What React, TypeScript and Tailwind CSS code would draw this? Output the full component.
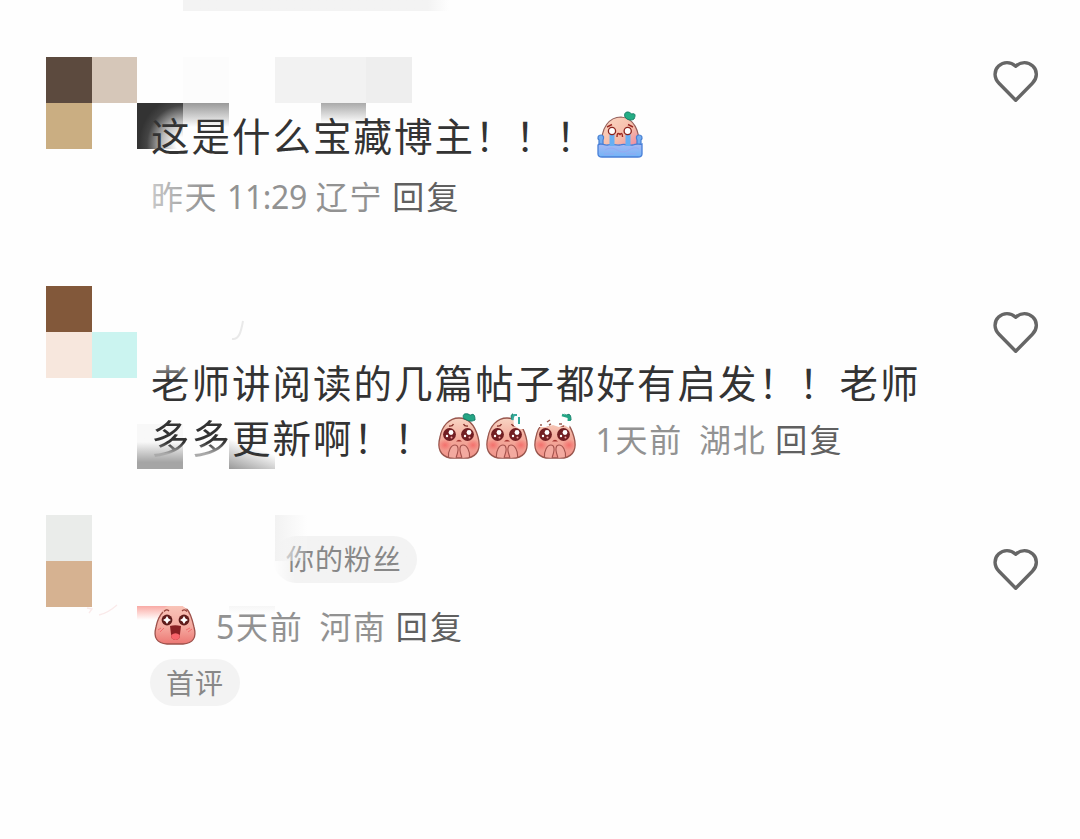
import type { ReactNode } from 'react';

function Heart() {
  return (
    <svg viewBox="0 0 49 44" className="h-[44px] w-[49px] shrink-0" fill="none" stroke="#666" strokeWidth="3.4" strokeLinejoin="round">
      <path d="M24.7 41.2 L8 24.2 C2.8 19 2.8 11.6 7.6 7.1 C12.4 2.5 19.4 2.4 24.7 7.2 C30 2.4 37 2.5 41.8 7.1 C46.6 11.6 46.6 19 41.4 24.2 Z" />
    </svg>
  );
}

function Leaf() {
  return (
    <path d="M27 6 C25 2 27 0 31 1 C33 2 33 2 34 2 C37 0 38 3 38 7 C34 9 31 8 28 6 Z" fill="#24a584" stroke="#167a68" strokeWidth="1" />
  );
}

function CryingPeach() {
  return (
    <svg viewBox="0 0 48 48" className="h-[48px] w-[48px] shrink-0">
      <defs>
        <linearGradient id="cry-skin" x1="0" y1="0" x2="1" y2="1">
          <stop offset="0" stopColor="#fbd9c4" />
          <stop offset=".6" stopColor="#f6bba9" />
          <stop offset="1" stopColor="#ec82a0" />
        </linearGradient>
        <linearGradient id="cry-water" x1="0" y1="0" x2="0" y2="1">
          <stop offset="0" stopColor="#a9b9f3" />
          <stop offset="1" stopColor="#72b4f7" />
        </linearGradient>
      </defs>
      <path d="M6 36 C4 16 14 6 25 6 C38 7 44 20 43 36 Z" fill="url(#cry-skin)" stroke="#94605c" strokeWidth="1.2" />
      <path d="M29 6 C28 3 29 1 32 1 C34 1 35 3 36 3 C39 2 40 4 38 8 C35 10 31 9 29 6 Z" fill="#24ad84" stroke="#188068" strokeWidth="1" />
      <path d="M3 33 V29 C1 27 2 24 5 24 C8 24 8 27 7 29 V33 M45 33 V29 C47 27 46 24 43 24 C40 24 40 27 41 29 V33" fill="#74adf0" stroke="#467fd2" strokeWidth="1.2" />
      <path d="M2 34 C5 31 8 35 12 34 C16 32 19 35 24 34 C29 32 32 35 37 34 C41 32 44 34 46 33 V43 Q46 46 42 46 H6 Q2 46 2 43 Z" fill="url(#cry-water)" stroke="#487fd8" strokeWidth="1.3" />
      <path d="M9 39 Q15 35 21 39 T33 39 T43 38 M8 43 H18 M30 43 H40" fill="none" stroke="#9aa5f0" strokeWidth="1" opacity=".8" />
      <path d="M13.5 22 H18.5 V35 H13.5 Z M29.5 22 H34.5 V35 H29.5 Z" fill="#68aff3" />
      <circle cx="16" cy="20" r="3.6" fill="#fff" stroke="#8c241e" strokeWidth="1.3" />
      <circle cx="31.7" cy="20" r="3.6" fill="#fff" stroke="#8c241e" strokeWidth="1.3" />
      <path d="M11 16 L16 13.5 M32 13.5 L37 16 M21 26 Q21 20.5 24 23.5 Q26.5 20.5 26.5 26" fill="none" stroke="#9d2b25" strokeWidth="1.4" />
    </svg>
  );
}

function BeggingPeach({ erased = 0 }: { erased?: number }) {
  return (
    <svg viewBox="0 0 44 48" className="h-[48px] w-[44px] shrink-0">
      <defs>
        <linearGradient id="beg-skin" x1="0" y1="0" x2="0" y2="1">
          <stop offset="0" stopColor="#f8d5c4" />
          <stop offset=".5" stopColor="#f3aa9b" />
          <stop offset="1" stopColor="#f1938a" />
        </linearGradient>
        <radialGradient id="beg-cheek">
          <stop offset="0" stopColor="#f4605f" stopOpacity=".75" />
          <stop offset="1" stopColor="#f4605f" stopOpacity="0" />
        </radialGradient>
      </defs>
      <path d="M3 24 C5 13 12 5 22 5 C33 5 38 13 41 24 C44 35 41 43 31 45 H13 C3 43 0 35 3 24 Z" fill="url(#beg-skin)" stroke="#98564d" strokeWidth="1.3" />
      <ellipse cx="8" cy="32" rx="7" ry="6" fill="url(#beg-cheek)" />
      <ellipse cx="36" cy="32" rx="7" ry="6" fill="url(#beg-cheek)" />
      <Leaf />
      <circle cx="12.5" cy="21.5" r="6.4" fill="#711e22" />
      <circle cx="30.5" cy="21.5" r="6.4" fill="#711e22" />
      <g fill="#fff">
        <circle cx="14" cy="19.5" r="2.4" />
        <circle cx="32" cy="19.5" r="2.4" />
        <circle cx="10" cy="23" r="1.2" />
        <circle cx="28" cy="23" r="1.2" />
        <circle cx="14.5" cy="24.5" r="1" fill="#f3a2a0" />
        <circle cx="32.5" cy="24.5" r="1" fill="#f3a2a0" />
      </g>
      <path d="M12 13 Q15.500 13.500 16.500 11 M26.500 11 Q27.500 13.500 31 13" fill="none" stroke="#88362f" strokeWidth="1.4" />
      <path d="M19 28.500 Q22 25 25 28.500 Z" fill="#a63834" />
      <path d="M11.500 44 C11 38 14 32 18 32 C21.500 32 21.500 37 20.500 40 L19 45 M32.500 44 C33 38 30 32 26 32 C22.500 32 22.500 37 23.500 40 L25 45" fill="#f3aaa0" stroke="#a4534d" strokeWidth="1.1" />
      {erased === 1 && (
        <>
          <path d="M28 0 H44 V16 H35 L29 13 Z" fill="#fefefe" />
          <path d="M27 7 L29 2 H32 M34 4 V11" fill="none" stroke="#36a99b" strokeWidth="2" />
        </>
      )}
      {erased === 2 && (
        <>
          <path d="M0 0 H31 L38 9 L36 15 L31 12 L26 14 L20 12 L13 14 L6 14 L0 21 Z" fill="#fefefe" />
          <path d="M14 9 L17 7 M16 12 L18 11 M26 11 H29 M8 11 V13" stroke="#9a5b4f" strokeWidth="1.5" />
          <path d="M29 2 L36 4 V8" fill="none" stroke="#24a584" strokeWidth="2.8" />
        </>
      )}
    </svg>
  );
}

function AmazedPeach() {
  return (
    <svg viewBox="0 0 44 42" className="h-[42px] w-[44px] shrink-0">
      <defs>
        <linearGradient id="wow-skin" x1="0" y1="0" x2="0" y2="1">
          <stop offset="0" stopColor="#f9c4b8" />
          <stop offset=".55" stopColor="#f5aaa0" />
          <stop offset="1" stopColor="#ec7773" />
        </linearGradient>
      </defs>
      <path d="M3 23 C5 13 9 4 15 2 H30 C36 5 39 13 41 23 C44 34 40 39 30 40 H14 C4 39 0 34 3 23 Z" fill="url(#wow-skin)" />
      <path d="M10 8 C7 11 4 18 3 23 C0 34 4 39 14 40 H30 C40 39 44 34 41 23 C39 14 36 7 33 4" fill="none" stroke="#9d514b" strokeWidth="1.3" />
      <path d="M27 0 H39 L34 5 Z" fill="#fefefe" />
      <circle cx="14" cy="16" r="5.4" fill="#5f1c1b" />
      <circle cx="31" cy="16" r="5.4" fill="#5f1c1b" />
      <path d="M14 12 L15.500 14.500 L18 16 L15.500 17.500 L14 20 L12.500 17.500 L10 16 L12.500 14.500 Z M31 12 L32.500 14.500 L35 16 L32.500 17.500 L31 20 L29.500 17.500 L27 16 L29.500 14.500 Z" fill="#fff" />
      <path d="M11 7.500 Q13.500 4.500 16 7 M29 7 Q31.500 4.500 34 7.500" fill="none" stroke="#96413b" strokeWidth="1.2" />
      <path d="M17 22 Q22 20.500 28 22 L26.500 34 Q22.500 38 18.500 34 Z" fill="#8a2024" />
      <path d="M18.200 31 Q22.500 27.500 26.800 31 L26.500 34 Q22.500 38 18.500 34 Z" fill="#f8646b" />
      <path d="M5 26 L8 24 M7 28 L11 24 M33 26 L37 24 M35 28 L39 25" stroke="#ef6e70" strokeWidth="1" />
    </svg>
  );
}

function Text({ children }: { children: ReactNode }) {
  return <span className="text-[38.5px] tracking-[2px] text-[#333]">{children}</span>;
}

function Meta({ time, place, className }: { time: ReactNode; place: string; className?: string }) {
  return (
    <span className={`flex items-center text-[32px] text-[#929292] ${className ?? ''}`}>
      <span>{time}</span>
      <span className="tracking-[1.7px]">{place}</span>
      <span className="ml-[9px] tracking-[2.2px] text-[#606060]">回复</span>
    </span>
  );
}

export default function App() {
  return (
    <main className="relative h-[839px] w-[1080px] overflow-hidden bg-[#fefefe] pt-[57px] font-['Noto_Sans','Noto_Sans_CJK_SC',sans-serif] whitespace-nowrap">
      <div className="absolute top-0 left-[183px] h-[11px] w-[266px] bg-linear-to-r from-[#f3f3f3] from-92% to-[#fefefe]" />

      {/* first comment */}
      <section className="relative flex h-[229px] justify-between pr-[40px] pl-[46px]">
        <div className="grid h-[92px] w-[91px] grid-cols-2 grid-rows-2">
          <div className="bg-[#5c4a3e]" />
          <div className="bg-[#d6c7b9]" />
          <div className="bg-[#caae82]" />
        </div>
        <div className="absolute top-0 left-[183px] h-[46px] w-[46px] bg-[#fcfcfc]" />
        <div className="absolute top-0 left-[275px] h-[46px] w-[91px] bg-[#f2f2f2]" />
        <div className="absolute top-0 left-[366px] h-[46px] w-[46px] bg-[#eee]" />
        <div className="absolute top-[46px] left-[137px] h-[46px] w-[46px] bg-[radial-gradient(ellipse_44px_48px_at_100%_90%,#fefefe_15%,#bbb_48%,#444_82%,#333_100%)]" />
        <div className="absolute top-[46px] left-[183px] h-[24px] w-[46px] bg-linear-to-b from-[#999] to-[#fefefe]" />
        <div className="absolute top-[46px] left-[321px] h-[20px] w-[45px] bg-linear-to-b from-[#aaa] to-[#fefefe]" />
        <div className="relative ml-[14px] flex grow flex-col pt-[52px]">
          <div className="flex h-[56px] items-center">
            <Text>这是什么宝藏博主！！！</Text>
            <span className="mb-[5px] -ml-[1px]"><CryingPeach /></span>
          </div>
          <Meta
            className="h-[63px]"
            time={<><span className="tracking-[1.5px]">昨天</span><span className="mr-[9px] ml-[9px] tracking-[-0.4px]">11:29</span></>}
            place="辽宁"
          />
          <div className="absolute top-[118px] left-0 h-[44px] w-[56px] bg-linear-to-r from-[#fefefe]/50 to-transparent" />
        </div>
        <div className="pt-[2px]"><Heart /></div>
      </section>

      {/* second comment */}
      <section className="relative flex h-[229px] justify-between pr-[40px] pl-[46px]">
        <div className="grid h-[92px] w-[91px] grid-cols-2 grid-rows-2">
          <div className="bg-[#82583a]" />
          <div />
          <div className="bg-[#f7e7dd]" />
          <div className="bg-[#cbf4f0]" />
        </div>
        <div className="absolute top-[138px] left-[137px] h-[45px] w-[46px] bg-linear-to-b from-[#f8f8f8] from-40% to-[#a5a5a5] to-85%" />
        <div className="absolute top-[138px] left-[229px] h-[45px] w-[46px] bg-[linear-gradient(200deg,#fefefe_50%,#999)]" />
        <svg viewBox="0 0 16 24" className="absolute top-[33px] left-[229px] h-[24px] w-[16px]">
          <path d="M14 2 C12 13 10 21 3 20" fill="none" stroke="#e9e9e9" strokeWidth="2" />
        </svg>
        <div className="relative ml-[14px] flex grow flex-col pt-[71px]">
          <div className="flex h-[54px] items-center"><Text>老师讲阅读的几篇帖子都好有启发！！老师</Text></div>
          <div className="flex h-[55px] items-center">
            <Text>
              <span className="bg-linear-to-b from-[#333] from-58% to-[#aaa] to-80% bg-clip-text text-transparent">多多</span>
              更新啊！！
            </Text>
            <span className="mb-[4px] ml-[2px] flex gap-[4px]">
              <BeggingPeach />
              <BeggingPeach erased={1} />
              <BeggingPeach erased={2} />
            </span>
            <Meta
              className="mt-[2px] ml-[19px]"
              time={<span className="mr-[16px] tracking-[1.7px]">1天前</span>}
              place="湖北"
            />
          </div>
          <div className="absolute top-[74px] left-0 h-[20px] w-[40px] bg-linear-to-b from-[#fefefe]/70 to-transparent" />
        </div>
        <div className="pt-[24px]"><Heart /></div>
      </section>

      {/* third comment */}
      <section className="relative flex justify-between pr-[40px] pl-[46px]">
        <div className="grid h-[92px] w-[91px] grid-cols-2 grid-rows-2">
          <div className="bg-[#eaecea]" />
          <div />
          <div className="bg-[#d6b291]" />
        </div>
        <svg viewBox="0 0 36 20" className="absolute top-[84px] left-[84px] h-[20px] w-[36px]" fill="none">
          <path d="M3 9 L8 10 L5 14 M15 16 Q24 14 33 6" stroke="#faeaea" strokeWidth="1.3" />
        </svg>
        <div className="absolute top-[91px] left-[137px] h-[14px] w-[46px] bg-linear-to-b from-[#f8aaa5] to-[#fefefe]" />
        <div className="absolute top-[91px] left-[229px] h-[8px] w-[46px] bg-linear-to-b from-[#f6f6f6] to-[#fefefe]" />
        <div className="relative ml-[14px] flex grow flex-col items-start pt-[21px]">
          <div className="ml-[122px] flex h-[47px] items-center rounded-full bg-linear-to-r from-[#fefefe] to-[#f3f3f3] to-15% pr-[15px] pb-[2px] pl-[13px] text-[28px] tracking-[0.9px] text-[#888]">
            你的粉丝
          </div>
          <div className="absolute top-0 left-[124px] h-[46px] w-[32px] bg-linear-to-r from-[#f2f2f2] to-[#fefefe]/10" />
          <div className="mt-[5px] flex h-[71px] items-center">
            <span className="ml-[2px] pt-[2px]"><AmazedPeach /></span>
            <Meta
              className="mt-[6px] ml-[19px]"
              time={<span className="mr-[16px] tracking-[1.7px]">5天前</span>}
              place="河南"
            />
          </div>
          <div className="-ml-[1px] flex h-[47px] items-center rounded-full bg-[#f3f3f3] px-[16px] text-[28px] tracking-[1.1px] text-[#888]">
            首评
          </div>
        </div>
        <div className="pt-[32px]"><Heart /></div>
      </section>
    </main>
  );
}
